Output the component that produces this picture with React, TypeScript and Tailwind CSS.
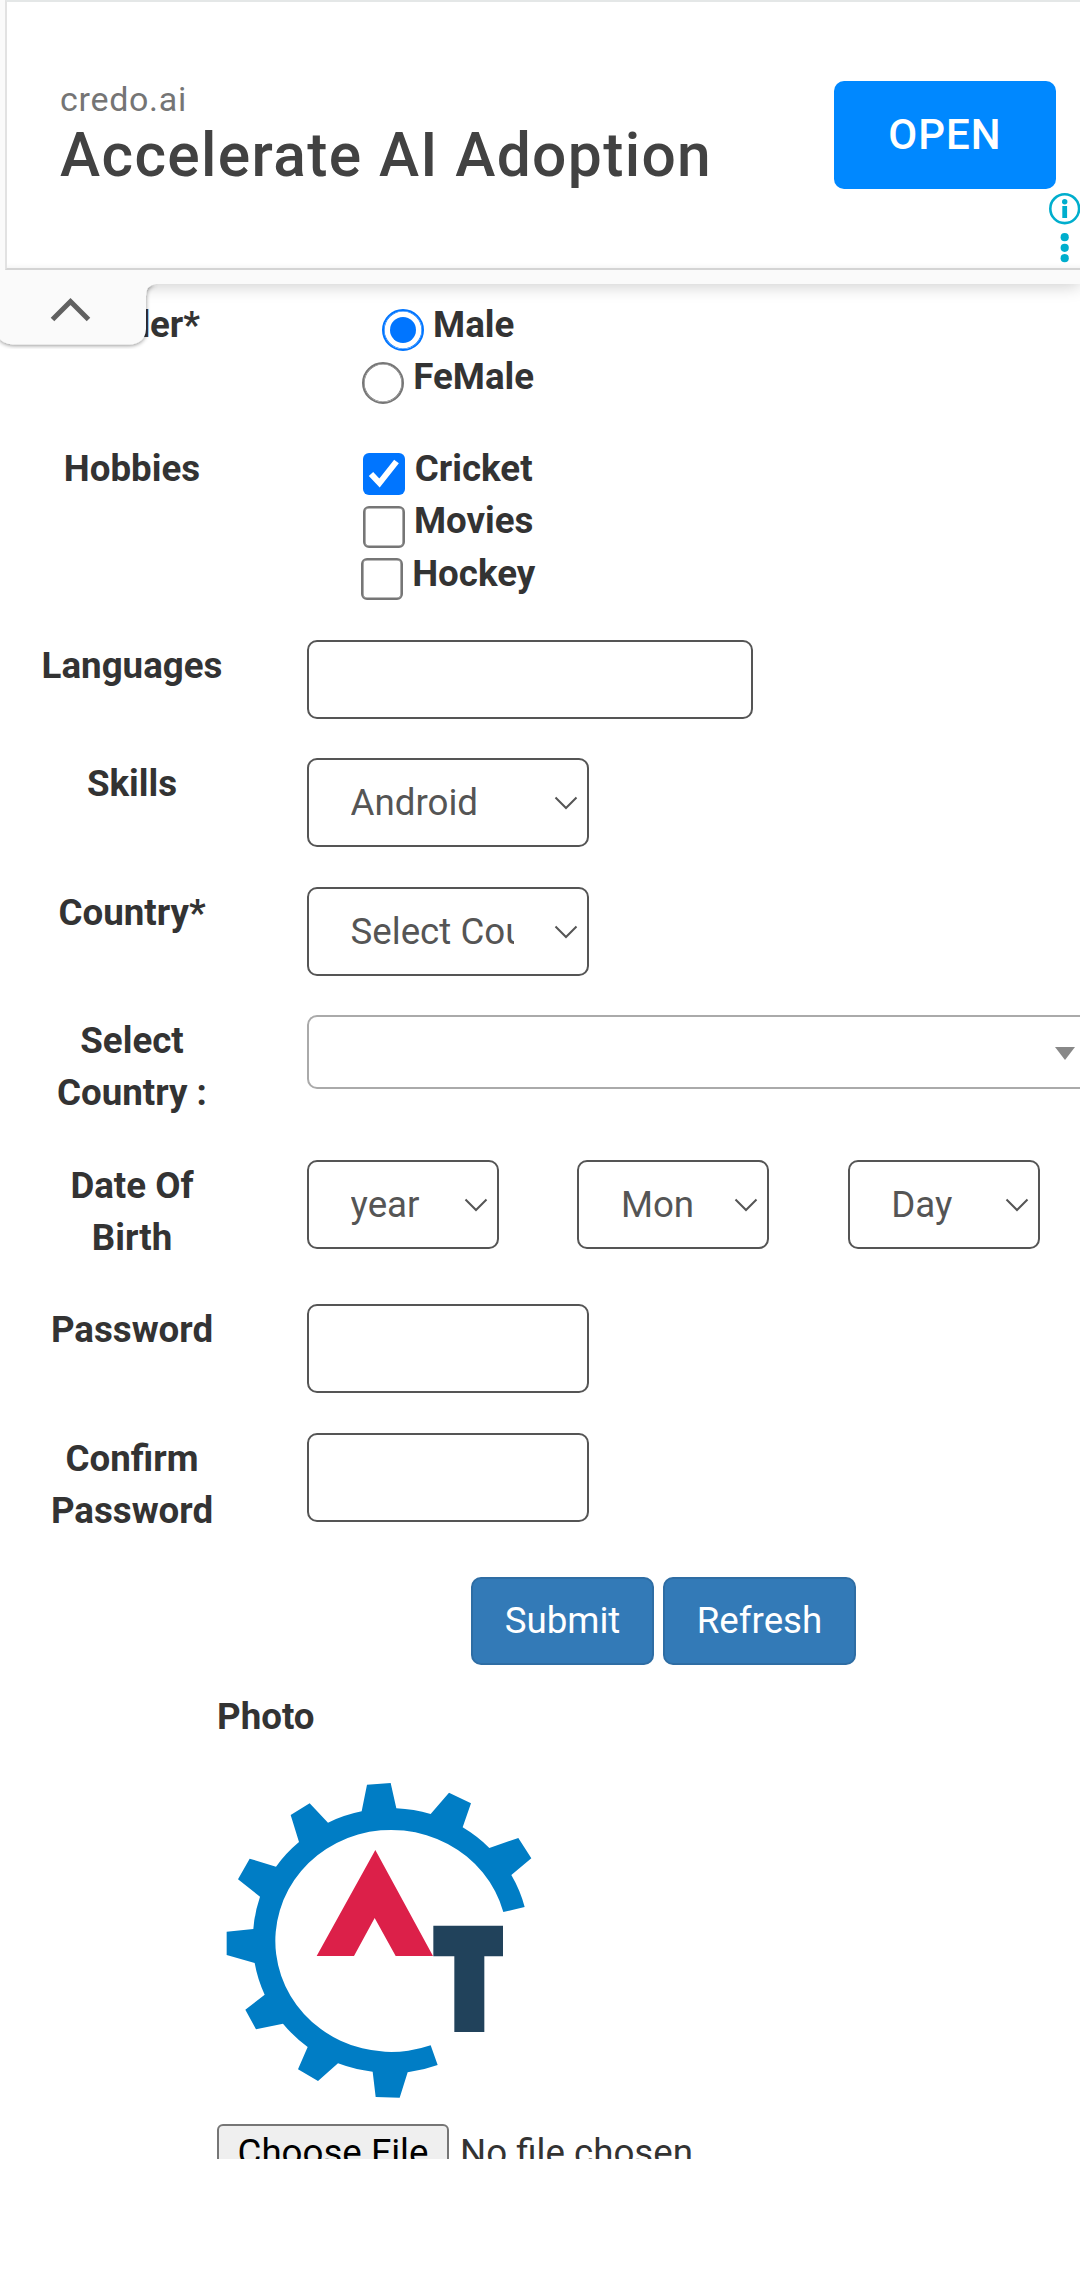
import type { ReactNode } from "react";

function Row({ label, height, children }: { label: ReactNode; height: string; children: ReactNode }) {
  return (
    <div className={`flex items-start shrink-0 ${height}`}>
      <div className="w-[264px] mr-[43px] pt-px shrink-0 text-center font-bold">{label}</div>
      {children}
    </div>
  );
}

function Select({ text, width, clip }: { text: string; width: string; clip: string }) {
  return (
    <div className={`mt-px h-[89px] shrink-0 flex items-center justify-between rounded-[10px] border-2 border-[#555] bg-white pl-[41.5px] pr-[9px] text-[#555] ${width}`}>
      <span className={`pt-[2px] overflow-hidden whitespace-nowrap ${clip}`}>{text}</span>
      <svg className="w-6 h-[14px] shrink-0" viewBox="0 0 24 14" fill="none" stroke="#555" strokeWidth="2">
        <path d="M1.5 1.5 12 12 22.5 1.5" />
      </svg>
    </div>
  );
}

function Choice({ kind, checked, text }: { kind: "radio" | "check"; checked?: boolean; text: string }) {
  return (
    <div className="h-[52.4px] flex items-start justify-center gap-[9.4px] font-bold">
      {kind === "radio" ? (
        <span
          className={`mt-[11.4px] size-[42px] shrink-0 rounded-full flex items-center justify-center bg-white ${
            checked
              ? "border-2 border-[#0075ff] shadow-[inset_0_0_0_0.6px_#0075ff]"
              : "border-2 border-[#767676] shadow-[inset_0_0_0_0.6px_#767676]"
          }`}
        >
          {checked && <span className="size-[26px] rounded-full bg-[#0075ff]" />}
        </span>
      ) : (
        <span
          className={`mt-[11.4px] size-[42px] shrink-0 rounded-[6px] ${
            checked ? "bg-[#0075ff]" : "border-2 border-[#767676] bg-white shadow-[inset_0_0_0_0.6px_#767676]"
          }`}
        >
          {checked && (
            <svg viewBox="0 0 42 42" fill="none" stroke="#fff" strokeWidth="6">
              <path d="M8 21 16.5 30 33.5 8.5" />
            </svg>
          )}
        </span>
      )}
      <span className="pt-px">{text}</span>
    </div>
  );
}

function Gear() {
  return (
    <svg className="ml-[3px] w-[320px] h-[327px] shrink-0" viewBox="61 291 960 981" preserveAspectRatio="none">
      <path
        fill="#007dc5"
        d="M693 1096 714 1155A413 396.5 0 0 1 624 1177L600 1253 528 1251 519 1175A413 396.5 0 0 1 415 1150L355 1203 295 1168 324 1101A413 396.5 0 0 1 250 1031L169 1048 137 989 195 944A413 396.5 0 0 1 165 849L81 825 81 755 161 747A413 396.5 0 0 1 181 650L115 598 150 536 229 560A413 396.5 0 0 1 298 486L273 405 330 370 385 428A413 396.5 0 0 1 486 394L502 314 573 309 590 385A413 396.5 0 0 1 693 402L748 338 814 370 789 442A413 396.5 0 0 1 869 504L956 474 995 535 935 585A413 396.5 0 0 1 975 681L911 696A348 333 0 1 0 693 1096Z"
      />
      <path fill="#dc2049" d="M527 510 700 828H588L525 714 463 828H351Z" />
      <path fill="#21425b" d="M701 737H910V829H854V1056H764V829H701Z" />
    </svg>
  );
}

function AdBanner() {
  return (
    <header className="relative z-10 h-[284px] shrink-0 bg-[#fafafa] shadow-[0_2px_16px_rgba(0,0,0,0.2)]">
      <div className="ml-[5px] h-[270px] flex items-start bg-white border-t-2 border-l-2 border-b-2 border-t-[#e4e7e7] border-l-[#e2e2e2] border-b-[#d4d4d4] shadow-[inset_0_-5px_5px_-4px_rgba(0,0,0,0.06)]">
        <div className="ml-[53px] mt-[75px] w-[774px]">
          <div className="text-[34px] leading-[44px] tracking-[0.7px] text-[#757575]">credo.ai</div>
          <div className="whitespace-nowrap text-[60.5px] leading-[70px] font-medium tracking-[1.35px] text-[#424242]">Accelerate AI Adoption</div>
        </div>
        <button className="mt-[79px] h-[108px] w-[222px] shrink-0 rounded-[10px] bg-[#08f] text-white font-medium text-[42px] leading-[60px] tracking-[1px]">
          OPEN
        </button>
      </div>
      {/* ad choices */}
      <svg className="absolute right-0 top-[190px] w-8 h-[76px]" viewBox="0 0 32 76" fill="#00aecd">
        <circle cx="16.7" cy="18.7" r="14.4" fill="none" stroke="#00aecd" strokeWidth="2.6" />
        <circle cx="16.7" cy="11.7" r="2.7" />
        <path d="M14.3 16h4.8v12h-4.8z" />
        <circle cx="16.7" cy="47.2" r="4.1" />
        <circle cx="16.7" cy="57.8" r="4.1" />
        <circle cx="16.7" cy="68.2" r="4.1" />
      </svg>
      {/* collapse tab */}
      <svg className="absolute left-0 top-[284px] w-[170px] h-[65px]" viewBox="0 0 170 65" fill="none">
        <defs>
          <filter id="tab" x="-20%" y="-20%" width="140%" height="150%">
            <feDropShadow dx="0" dy="1" stdDeviation="2.2" floodColor="#000" floodOpacity="0.45" />
          </filter>
        </defs>
        <path filter="url(#tab)" fill="#fafafa" d="M-2 -20H150V0H156Q146 1 146 12V45Q145 60 129 60.5H13Q2 60 -2 52Z" />
        <path d="M52.5 35.5 70.5 17.5 88.5 35.5" stroke="#616161" strokeWidth="5" />
      </svg>
    </header>
  );
}

export default function App() {
  return (
    <div className="w-[1080px] h-[2274px] overflow-hidden bg-white">
      <div className="h-[2159px] overflow-hidden flex flex-col font-[Roboto,sans-serif] text-[36.7px] leading-[52.4px] text-[#333]">
        <AdBanner />
        <main className="pt-[14px] flex flex-col">
          <Row label="Gender*" height="h-[144px]">
            <div className="w-[282px]">
              <Choice kind="radio" checked text="Male" />
              <Choice kind="radio" text="FeMale" />
            </div>
          </Row>
          <Row label="Hobbies" height="h-[197px]">
            <div className="w-[282px]">
              <Choice kind="check" checked text="Cricket" />
              <Choice kind="check" text="Movies" />
              <Choice kind="check" text="Hockey" />
            </div>
          </Row>
          <Row label="Languages" height="h-[118px]">
            <input className="mt-px w-[446px] h-[79px] rounded-[10px] border-2 border-[#555]" />
          </Row>
          <Row label="Skills" height="h-[129px]">
            <Select text="Android" width="w-[282px]" clip="w-[163px]" />
          </Row>
          <Row label="Country*" height="h-[128px]">
            <Select text="Select Country" width="w-[282px]" clip="w-[163px]" />
          </Row>
          <Row label={<>Select<br />Country :</>} height="h-[145px]">
            <div className="mt-px w-[800px] h-[74px] shrink-0 rounded-[10px] border-2 border-[#aaa] pl-[746px] pt-[30px]">
              <svg className="w-5 h-[13px]" viewBox="0 0 20 13" fill="#888">
                <path d="M0 0h20L10 13z" />
              </svg>
            </div>
          </Row>
          <Row label={<>Date Of<br />Birth</>} height="h-[144px]">
            <div className="flex gap-[78.4px]">
              <Select text="year" width="w-[192px]" clip="w-[80px]" />
              <Select text="Mon" width="w-[192px]" clip="w-[80px]" />
              <Select text="Day" width="w-[192px]" clip="w-[80px]" />
            </div>
          </Row>
          <Row label="Password" height="h-[129px]">
            <input className="mt-px w-[282px] h-[89px] rounded-[10px] border-2 border-[#555]" />
          </Row>
          <Row label={<>Confirm<br />Password</>} height="h-[145px]">
            <input className="mt-px w-[282px] h-[89px] rounded-[10px] border-2 border-[#555]" />
          </Row>
          <div className="ml-[471px] flex gap-[9px] text-white">
            <button className="h-[88px] w-[183px] rounded-[10px] border-2 border-[#2e6da4] bg-[#337ab7]">Submit</button>
            <button className="h-[88px] w-[193px] rounded-[10px] border-2 border-[#2e6da4] bg-[#337ab7]">Refresh</button>
          </div>
          <div className="ml-[217px] mt-[26px] flex flex-col">
            <div className="h-[86px] font-bold">Photo</div>
            <Gear />
            <div className="mt-[20px] flex gap-[11px]">
              <div className="w-[232px] h-[58px] pt-px shrink-0 rounded-[6px] border-2 border-[#767676] bg-[#efefef] text-center text-black">Choose File</div>
              <span className="mt-[3px] whitespace-nowrap">No file chosen</span>
            </div>
          </div>
        </main>
      </div>
    </div>
  );
}
